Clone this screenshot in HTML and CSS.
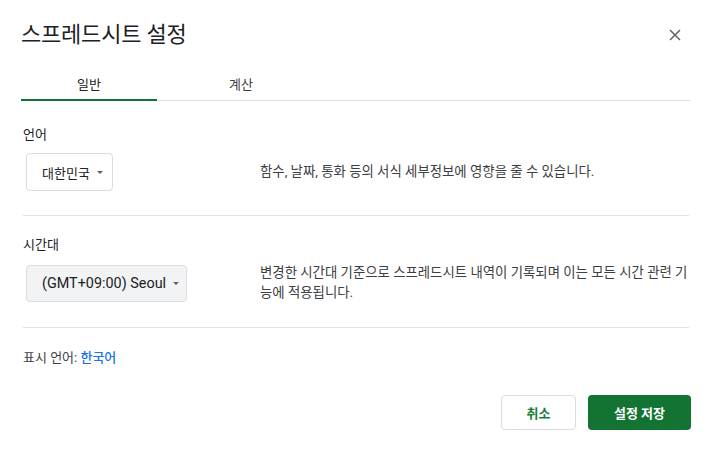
FILE: index.html
```html
<!DOCTYPE html>
<html lang="ko">
<head>
<meta charset="utf-8">
<link rel="stylesheet" href="styles.css">
</head>
<body>
<div class="dialog">
  <div class="header">
    <h1 class="title">스프레드시트 설정</h1>
    <button class="close" aria-label="닫기">
      <svg width="12" height="12" viewBox="0 0 12 12"><path d="M1 1L11 11M11 1L1 11" stroke="#5f6368" stroke-width="1.5" fill="none"/></svg>
    </button>
  </div>
  <div class="tabs">
    <div class="tab active">일반</div>
    <div class="tab">계산</div>
  </div>
  <div class="section">
    <div class="label">언어</div>
    <div class="row">
      <div class="select-col">
        <div class="select lang">대한민국<span class="caret"></span></div>
      </div>
      <div class="desc">함수, 날짜, 통화 등의 서식 세부정보에 영향을 줄 수 있습니다.</div>
    </div>
  </div>
  <div class="section second">
    <div class="label">시간대</div>
    <div class="row">
      <div class="select-col">
        <div class="select tz">(GMT+09:00) Seoul<span class="caret"></span></div>
      </div>
      <div class="desc">변경한 시간대 기준으로 스프레드시트 내역이 기록되며 이는 모든 시간 관련 기능에 적용됩니다.</div>
    </div>
  </div>
  <div class="display-lang">표시 언어: <a class="link">한국어</a></div>
  <div class="actions">
    <button class="btn secondary">취소</button>
    <button class="btn primary">설정 저장</button>
  </div>
</div>
</body>
</html>
```
FILE: styles.css
```css
* { box-sizing: border-box; }
html, body { margin: 0; padding: 0; background: #fff; }
body {
  font-family: Roboto, "Noto Sans CJK KR", "Liberation Sans", sans-serif;
  color: #202124;
  width: 713px;
  height: 450px;
  overflow: hidden;
}
.dialog {
  padding: 0 22px 0 23px;
}
.header {
  display: flex;
  align-items: center;
  justify-content: space-between;
  height: 70px;
}
.title {
  margin: 0 0 0 -2px;
  font-size: 22px;
  line-height: 28px;
  font-weight: 400;
  color: #202124;
  letter-spacing: -0.2px;
}
.close {
  border: 0;
  background: none;
  padding: 0;
  margin-right: 10px;
  width: 12px;
  height: 12px;
  display: flex;
}
.tabs {
  display: flex;
  margin-left: -2px;
  margin-right: 1px;
  border-bottom: 1px solid #e0e0e0;
  height: 31px;
}
.tab {
  width: 136px;
  height: 31px;
  text-align: center;
  font-size: 13px;
  color: #3c4043;
  line-height: 29px;
}
.tab.active {
  color: #202124;
  border-bottom: 2px solid #137333;
}
.tab + .tab { width: 168px; }
.section {
  border-bottom: 1px solid #e3e3e3;
  margin-right: 2px;
  padding: 25px 0 24px;
}
.section.second { padding-top: 20px; }
.label {
  font-size: 13px;
  color: #202124;
  line-height: 18px;
  margin-bottom: 9px;
}
.row {
  display: flex;
  align-items: center;
}
.select-col {
  width: 237px;
  flex: none;
  padding-left: 3px;
}
.select {
  display: flex;
  align-items: center;
  height: 38px;
  border: 1px solid #dadce0;
  border-radius: 4px;
  padding: 0 0 0 15px;
  font-size: 13px;
  color: #202124;
}
.select.lang { width: 87px; }
.select.tz { width: 161px; height: 37px; background: #f1f3f4; font-size: 14.4px; }
.caret {
  width: 0; height: 0;
  border-left: 3.5px solid transparent;
  border-right: 3.5px solid transparent;
  border-top: 3.5px solid #5f6368;
  margin-left: 7px;
}
.desc {
  font-size: 13.4px;
  line-height: 20px;
  color: #3c4043;
  flex: 1;
}
.display-lang {
  font-size: 13px;
  line-height: 18px;
  padding-top: 21px;
  color: #3c4043;
}
.link { color: #1a73e8; font-weight: 500; }
.actions {
  display: flex;
  justify-content: flex-end;
  gap: 12px;
  margin-top: 28px;
}
.btn {
  height: 35px;
  border-radius: 4px;
  font-family: Roboto, "Noto Sans CJK KR", sans-serif;
  font-size: 13px;
  font-weight: 700;
  padding: 0;
}
.secondary {
  width: 75px;
  background: #fff;
  border: 1px solid #dadce0;
  color: #188038;
}
.primary {
  width: 103px;
  background: #137333;
  border: 0;
  color: #fff;
}
```
